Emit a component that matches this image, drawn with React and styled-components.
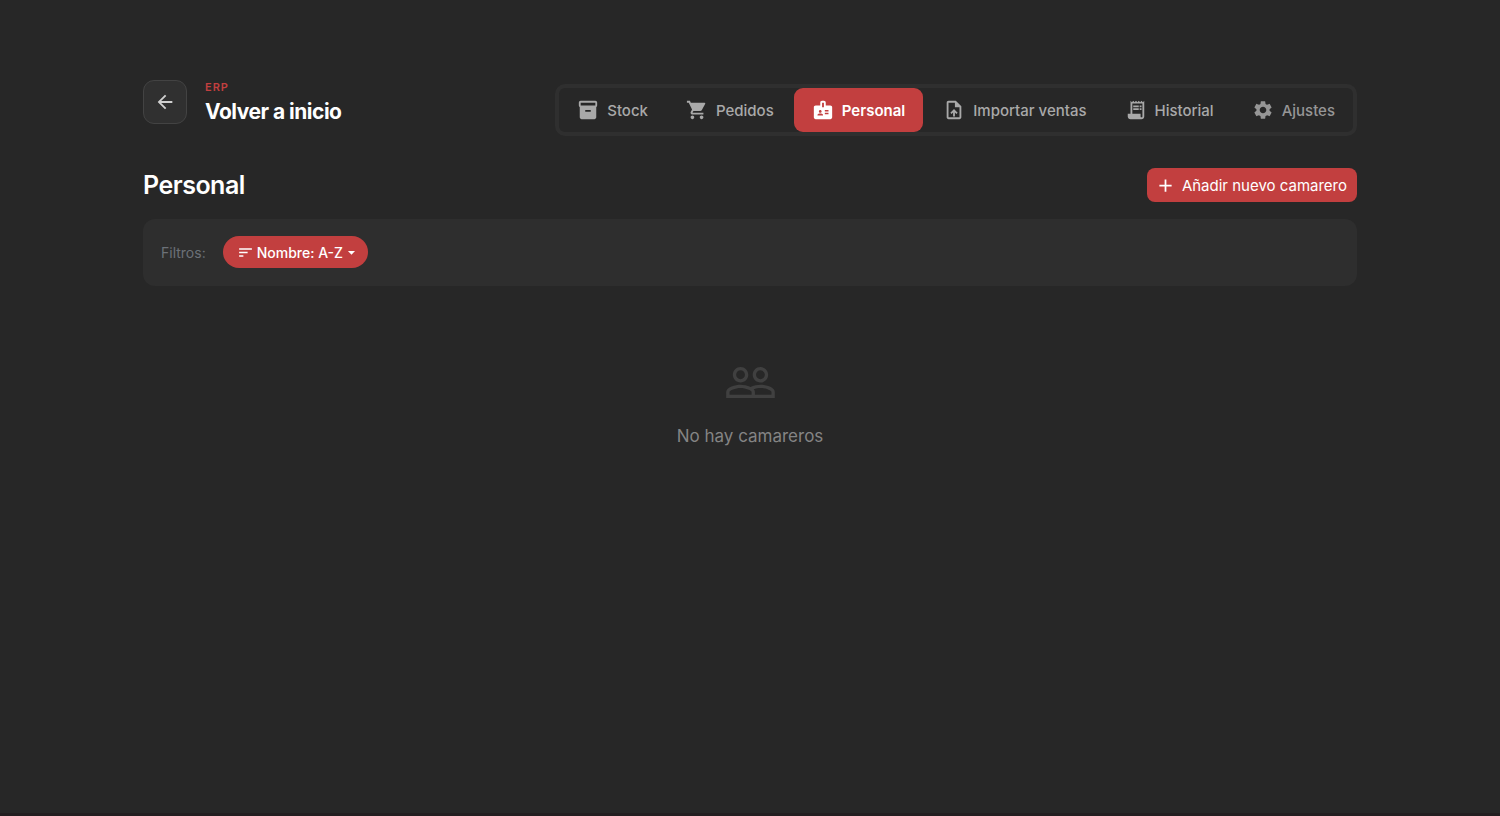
import React, { useState } from 'react';
import {
  MdAdd,
  MdArrowBack,
  MdArrowDropDown,
  MdBadge,
  MdInventory2,
  MdOutlineUploadFile,
  MdPeopleOutline,
  MdReceiptLong,
  MdSettings,
  MdShoppingCart,
  MdSort
} from 'react-icons/md';
import styled, { createGlobalStyle } from 'styled-components';

const GlobalStyle = createGlobalStyle`
  * {
    box-sizing: border-box;
  }

  body {
    margin: 0;
    background-color: #272727;
    color: #ffffff;
    font-family: Inter, sans-serif;
  }

  button,
  select {
    font-family: inherit;
    border: none;
    cursor: pointer;
  }
`;

const Page = styled.div`
  min-height: 100vh;
  padding: 80px 24px 0;
  border-bottom: 3px solid #231e20;
`;

const Container = styled.div`
  max-width: 1214px;
  margin: 0 auto;
`;

const Header = styled.header`
  display: flex;
  justify-content: space-between;
  align-items: flex-start;
`;

const BackArea = styled.div`
  display: flex;
  align-items: flex-start;
  gap: 18px;
`;

const BackButton = styled.button`
  display: flex;
  align-items: center;
  justify-content: center;
  width: 44px;
  height: 44px;
  padding: 0;
  border: 1px solid #434343;
  border-radius: 11px;
  background-color: #303030;
  color: #d0d0d0;
  font-size: 22px;
`;

const Eyebrow = styled.div`
  color: #c23f3f;
  font-size: 11px;
  font-weight: 600;
  line-height: 14px;
  letter-spacing: 1px;
`;

const BackTitle = styled.div`
  font-size: 21px;
  font-weight: 700;
  line-height: 36px;
  letter-spacing: -0.5px;
`;

const Nav = styled.nav`
  display: flex;
  gap: 2px;
  margin-top: 4px;
  border: 4px solid #2f2f2f;
  border-radius: 10px;
`;

const NavItem = styled.button`
  display: flex;
  align-items: center;
  gap: 8px;
  height: 44px;
  padding: 0 18px;
  border-radius: 9px;
  background-color: ${({ $active }) => ($active ? '#c23f3f' : 'transparent')};
  color: ${({ $active, $muted }) => ($active ? '#ffffff' : $muted ? '#969696' : '#a9a9a9')};
  font-size: 15px;
  font-weight: ${({ $active }) => ($active ? 600 : 500)};

  svg {
    font-size: 22px;
  }
`;

const TitleRow = styled.div`
  display: flex;
  align-items: center;
  justify-content: space-between;
  margin-top: 32px;
`;

const Title = styled.h1`
  margin: 0;
  font-size: 25px;
  font-weight: 600;
  line-height: 34px;
  letter-spacing: -0.5px;
`;

const AddButton = styled.button`
  display: flex;
  align-items: center;
  gap: 6px;
  height: 34px;
  padding: 0 10px 0 8px;
  border-radius: 8px;
  background-color: #c23f3f;
  color: #ffffff;
  font-size: 15px;
  font-weight: 400;

  svg {
    font-size: 21px;
  }
`;

const Filters = styled.section`
  display: flex;
  align-items: center;
  gap: 17px;
  margin-top: 17px;
  padding: 17px 18px 18px;
  border-radius: 12px;
  background-color: #2e2e2e;
`;

const FilterLabel = styled.label`
  color: #6c7178;
  font-size: 14px;
`;

const Pill = styled.div`
  display: flex;
  align-items: center;
  height: 32px;
  padding: 0 8px 0 14px;
  border-radius: 16px;
  background-color: #c23f3f;
  color: #ffffff;

  svg {
    font-size: 17px;
    pointer-events: none;
  }
`;

const PillSelect = styled.select`
  appearance: none;
  field-sizing: content;
  height: 32px;
  margin: 0;
  padding: 0 0 0 3px;
  background-color: transparent;
  color: inherit;
  font-size: 14px;
  font-weight: 500;

  option {
    background-color: #2e2e2e;
  }
`;

const Empty = styled.div`
  display: flex;
  flex-direction: column;
  align-items: center;
  gap: 14px;
  padding: 70px 0;
  color: #848484;
  font-size: 17px;
  line-height: 26px;

  svg {
    color: #404040;
    font-size: 53px;
  }
`;

const sections = [
  { name: 'Stock', Icon: MdInventory2 },
  { name: 'Pedidos', Icon: MdShoppingCart },
  { name: 'Personal', Icon: MdBadge },
  { name: 'Importar ventas', Icon: MdOutlineUploadFile },
  { name: 'Historial', Icon: MdReceiptLong },
  { name: 'Ajustes', Icon: MdSettings, muted: true }
];

const App = () => {
  const [active, setActive] = useState('Personal');
  const [order, setOrder] = useState('asc');

  return (
    <>
      <GlobalStyle />
      <Page>
        <Container>
          <Header>
            <BackArea>
              <BackButton aria-label="Volver a inicio">
                <MdArrowBack />
              </BackButton>
              <div>
                <Eyebrow>ERP</Eyebrow>
                <BackTitle>Volver a inicio</BackTitle>
              </div>
            </BackArea>
            <Nav>
              {sections.map(({ name, Icon, muted }) => (
                <NavItem
                  key={name}
                  $active={active === name}
                  $muted={muted}
                  onClick={() => setActive(name)}
                >
                  <Icon />
                  {name}
                </NavItem>
              ))}
            </Nav>
          </Header>

          <TitleRow>
            <Title>{active}</Title>
            <AddButton>
              <MdAdd />
              Añadir nuevo camarero
            </AddButton>
          </TitleRow>

          <Filters>
            <FilterLabel htmlFor="order">Filtros:</FilterLabel>
            <Pill>
              <MdSort />
              <PillSelect id="order" value={order} onChange={(e) => setOrder(e.target.value)}>
                <option value="asc">Nombre: A-Z</option>
                <option value="desc">Nombre: Z-A</option>
              </PillSelect>
              <MdArrowDropDown />
            </Pill>
          </Filters>

          <Empty>
            <MdPeopleOutline />
            No hay camareros
          </Empty>
        </Container>
      </Page>
    </>
  );
};

export default App;
